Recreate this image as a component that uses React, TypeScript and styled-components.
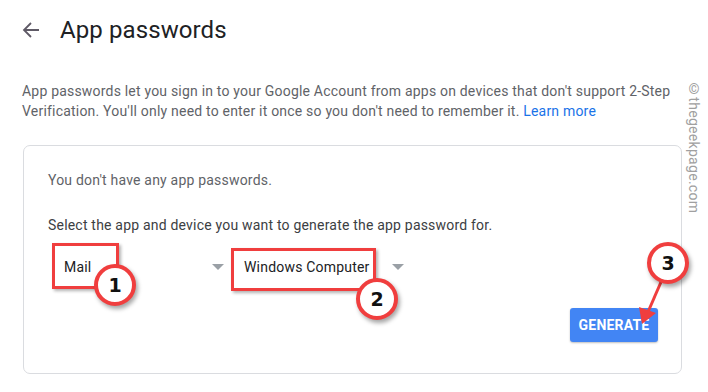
import React from "react";
import styled, { createGlobalStyle } from "styled-components";

const Global = createGlobalStyle`
  html, body { margin: 0; padding: 0; background: #fff; }
  body { font-family: Roboto, "Liberation Sans", Arial, sans-serif; }
`;

const Page = styled.div`
  position: relative;
  width: 708px;
  height: 392px;
  overflow: hidden;
  box-sizing: border-box;
  padding: 16px 0 0 22px;
`;

const Header = styled.div`
  display: flex;
  align-items: center;
  gap: 20px;
  height: 28px;
`;

const BackIcon = styled.svg`
  width: 18px;
  height: 18px;
  flex: none;
`;

const Title = styled.h1`
  margin: 0;
  font-size: 24px;
  font-weight: 400;
  color: #202124;
  letter-spacing: 0.1px;
`;

const Intro = styled.p`
  margin: 37px 0 0 0;
  font-size: 14px;
  line-height: 20px;
  letter-spacing: 0.2px;
  color: #5f6368;
  width: 670px;
`;

const Link = styled.a`
  color: #1a73e8;
  text-decoration: none;
`;

const Card = styled.div`
  margin: 24px 0 0 1px;
  width: 659px;
  height: 229px;
  box-sizing: border-box;
  border: 1px solid #dadce0;
  border-radius: 7px;
  padding: 24px 23px 0 24px;
  display: flex;
  flex-direction: column;
`;

const Line = styled.div<{ $gap?: number; $dark?: boolean }>`
  margin-top: ${(p) => p.$gap ?? 0}px;
  font-size: 14px;
  line-height: 20px;
  letter-spacing: 0.2px;
  color: ${(p) => (p.$dark ? "#3c4043" : "#5f6368")};
`;

const Selects = styled.div`
  display: flex;
  margin-top: 12px;
  height: 40px;
`;

const Select = styled.div<{ $w: number }>`
  width: ${(p) => p.$w}px;
  display: flex;
  align-items: center;
  justify-content: space-between;
  box-sizing: border-box;
  padding: 0 4px 0 16px;
  font-size: 14px;
  letter-spacing: 0.2px;
  color: #202124;
`;

const Caret = styled.span`
  width: 0;
  height: 0;
  border-left: 6px solid transparent;
  border-right: 6px solid transparent;
  border-top: 6px solid #9aa0a6;
`;

const Footer = styled.div`
  display: flex;
  justify-content: flex-end;
  margin-top: 21px;
`;

const Button = styled.button`
  width: 88px;
  height: 34px;
  border: none;
  border-radius: 3px;
  background: #4285f4;
  color: #fff;
  font-family: Roboto, "Liberation Sans", Arial, sans-serif;
  font-weight: 700;
  font-size: 14px;
  letter-spacing: 0.2px;
  box-shadow: 0 1px 2px rgba(0, 0, 0, 0.25);
  padding: 0;
`;

const Watermark = styled.div`
  position: absolute;
  left: 686px;
  top: 81px;
  writing-mode: vertical-rl;
  font-size: 14px;
  color: #a0a0a0;
  font-family: Roboto, "Liberation Sans", Arial, sans-serif;
  letter-spacing: 0.3px;
`;

const Box = styled.div<{ $x: number; $y: number; $w: number; $h: number }>`
  position: absolute;
  left: ${(p) => p.$x}px;
  top: ${(p) => p.$y}px;
  width: ${(p) => p.$w}px;
  height: ${(p) => p.$h}px;
  box-sizing: border-box;
  border: 3px solid #f03e3e;
  box-shadow: 2px 2px 3px rgba(0, 0, 0, 0.3);
`;

const Badge = styled.div<{ $x: number; $y: number }>`
  position: absolute;
  left: ${(p) => p.$x - 21}px;
  top: ${(p) => p.$y - 21}px;
  width: 42px;
  height: 42px;
  box-sizing: border-box;
  border-radius: 50%;
  border: 4px solid #f03e3e;
  background: #fff;
  box-shadow: 2px 3px 4px rgba(0, 0, 0, 0.35);
  display: flex;
  align-items: center;
  justify-content: center;
  font-family: "DejaVu Sans", "Liberation Sans", sans-serif;
  font-weight: 700;
  font-size: 19px;
  color: #111;
`;

const ArrowLayer = styled.svg`
  position: absolute;
  left: 0;
  top: 0;
  width: 708px;
  height: 392px;
  pointer-events: none;
`;

export default function App() {
  return (
    <>
      <Global />
      <Page>
        <Header>
          <BackIcon viewBox="0 0 18 18">
            <path
              d="M17 9H2.5M9 2L2 9l7 7"
              fill="none"
              stroke="#5f5a66"
              strokeWidth="1.8"
            />
          </BackIcon>
          <Title>App passwords</Title>
        </Header>
        <Intro>
          App passwords let you sign in to your Google Account from apps on
          devices that don't support 2-Step
          <br />
          Verification. You'll only need to enter it once so you don't need to
          remember it. <Link>Learn more</Link>
        </Intro>
        <Card>
          <Line>You don't have any app passwords.</Line>
          <Line $gap={25} $dark>
            Select the app and device you want to generate the app password for.
          </Line>
          <Selects>
            <Select $w={180}>
              <span>Mail</span>
              <Caret />
            </Select>
            <Select $w={180}>
              <span>Windows Computer</span>
              <Caret />
            </Select>
          </Selects>
          <Footer>
            <Button>GENERATE</Button>
          </Footer>
        </Card>
        <Watermark>©thegeekpage.com</Watermark>
        <Box $x={52} $y={243} $w={67} $h={46} />
        <Box $x={231} $y={248} $w={145} $h={43} />
        <ArrowLayer viewBox="0 0 708 392">
          <line x1="661" y1="282" x2="648" y2="312" stroke="#f03e3e" strokeWidth="3" />
          <polygon points="642,324 639,307 656,313" fill="#f03e3e" />
        </ArrowLayer>
        <Badge $x={115} $y={285}>1</Badge>
        <Badge $x={377} $y={299}>2</Badge>
        <Badge $x={668} $y={263}>3</Badge>
      </Page>
    </>
  );
}
